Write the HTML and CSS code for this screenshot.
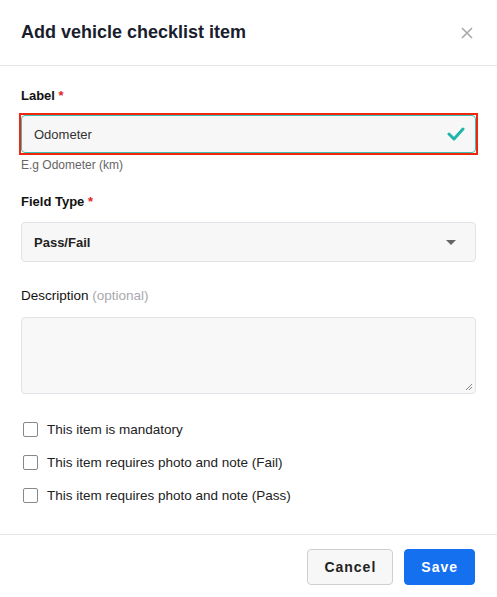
FILE: index.html
```html
<!DOCTYPE html>
<html>
<head>
    <meta name="viewport" content="width=device-width, initial-scale=1.0">
    <title>Add vehicle checklist item</title>
    <link rel="stylesheet" href="styles.css">
</head>
<body>
    <div class="modal">
        <div class="modal-header">
            <h1>Add vehicle checklist item</h1>
            <button class="close" aria-label="Close">
                <svg width="12" height="12" viewBox="0 0 12 12">
                    <path d="M1 1 L11 11 M11 1 L1 11" stroke="#a8a8ad" stroke-width="1.6" fill="none"/>
                </svg>
            </button>
        </div>

        <div class="modal-body">
            <div class="field">
                <label class="field-label">Label <span class="req">*</span></label>
                <div class="input-wrap">
                    <div class="input">
                        <span>Odometer</span>
                        <svg width="18" height="14" viewBox="0 0 18 14">
                            <path d="M2 7 L7 12 L16 2" stroke="#1fb5aa" stroke-width="3" fill="none" stroke-linecap="round" stroke-linejoin="round"/>
                        </svg>
                    </div>
                </div>
                <div class="hint">E.g Odometer (km)</div>
            </div>

            <div class="field field-wide">
                <label class="field-label">Field Type <span class="req">*</span></label>
                <div class="select">
                    <span>Pass/Fail</span>
                    <span class="caret"></span>
                </div>
            </div>

            <div class="field">
                <label class="field-label normal">Description <span class="optional">(optional)</span></label>
                <div class="textarea">
                    <svg class="grip" width="8" height="8" viewBox="0 0 8 8">
                        <path d="M7 1 L1 7 M7 4 L4 7" stroke="#777" stroke-width="0.9"/>
                    </svg>
                </div>
            </div>

            <div class="checks">
                <label class="check"><span class="box"></span>This item is mandatory</label>
                <label class="check"><span class="box"></span>This item requires photo and note (Fail)</label>
                <label class="check"><span class="box"></span>This item requires photo and note (Pass)</label>
            </div>
        </div>

        <div class="modal-footer">
            <button class="btn btn-cancel">Cancel</button>
            <button class="btn btn-save">Save</button>
        </div>
    </div>
</body>
</html>
```

FILE: styles.css
```css
body {
    margin: 0;
    font-family: "Liberation Sans", Arial, sans-serif;
    background-color: #fff;
    color: #1c1c1e;
}
.modal {
    width: 497px;
    height: 597px;
    display: flex;
    flex-direction: column;
}
.modal-header {
    height: 65px;
    display: flex;
    align-items: center;
    justify-content: space-between;
    padding: 0 21px;
    border-bottom: 1px solid #e6e6ea;
}
.modal-header h1 {
    margin: 0;
    font-size: 18px;
    font-weight: bold;
    color: #1a1d2e;
}
.close {
    border: none;
    background: none;
    padding: 0;
    margin-right: 3px;
    display: flex;
}
.modal-body {
    padding: 22px 21px 0 21px;
    flex: 1;
}
.field {
    margin-bottom: 22px;
}
.field-wide {
    margin-bottom: 26px;
}
.field-label {
    display: block;
    font-size: 13px;
    font-weight: bold;
    color: #111;
    margin-bottom: 10px;
}
.field-wide .field-label {
    margin-bottom: 13px;
}
.field-label.normal {
    font-weight: normal;
    font-size: 13.5px;
    margin-bottom: 14px;
}
.req {
    color: #e02424;
}
.optional {
    color: #a9a9ae;
}
.input-wrap {
    margin: 0 -2px;
    border: 2px solid #f0260f;
}
.input {
    height: 38px;
    box-sizing: border-box;
    border: 1px solid #3cc0b4;
    border-radius: 4px;
    background-color: #f7f7f7;
    display: flex;
    align-items: center;
    justify-content: space-between;
    padding: 0 10px 0 12px;
    font-size: 13px;
    color: #333;
}
.hint {
    font-size: 12px;
    color: #666;
    margin-top: 3px;
}
.select {
    height: 40px;
    box-sizing: border-box;
    border: 1px solid #e2e2e8;
    border-radius: 4px;
    background-color: #f7f7f7;
    display: flex;
    align-items: center;
    justify-content: space-between;
    padding: 0 19px 0 12px;
    font-size: 13px;
    font-weight: bold;
    color: #222;
}
.caret {
    width: 0;
    height: 0;
    border-left: 5px solid transparent;
    border-right: 5px solid transparent;
    border-top: 5px solid #666;
}
.textarea {
    height: 77px;
    box-sizing: border-box;
    border: 1px solid #e2e2e8;
    border-radius: 4px;
    background-color: #f8f8f9;
    position: relative;
}
.grip {
    position: absolute;
    right: 2px;
    bottom: 2px;
}
.checks {
    display: flex;
    flex-direction: column;
    gap: 18px;
    padding-top: 6px;
    padding-left: 2px;
}
.check {
    display: flex;
    align-items: center;
    gap: 9px;
    font-size: 13.5px;
    color: #222;
}
.box {
    width: 13px;
    height: 13px;
    border: 1px solid #888;
    border-radius: 2px;
    background: #fff;
}
.modal-footer {
    border-top: 1px solid #e6e6ea;
    height: 63px;
    box-sizing: border-box;
    padding: 1px 22px 0 0;
    display: flex;
    align-items: center;
    justify-content: flex-end;
    gap: 11px;
}
.btn {
    height: 36px;
    border-radius: 4px;
    font-family: "Liberation Sans", Arial, sans-serif;
    font-size: 14px;
    font-weight: bold;
    letter-spacing: 1px;
    padding: 0 16px;
    cursor: pointer;
}
.btn-cancel {
    background-color: #f7f7f7;
    border: 1px solid #cfcfd3;
    color: #222;
}
.btn-save {
    background-color: #1570ef;
    border: 1px solid #1570ef;
    color: #fff;
}
```
